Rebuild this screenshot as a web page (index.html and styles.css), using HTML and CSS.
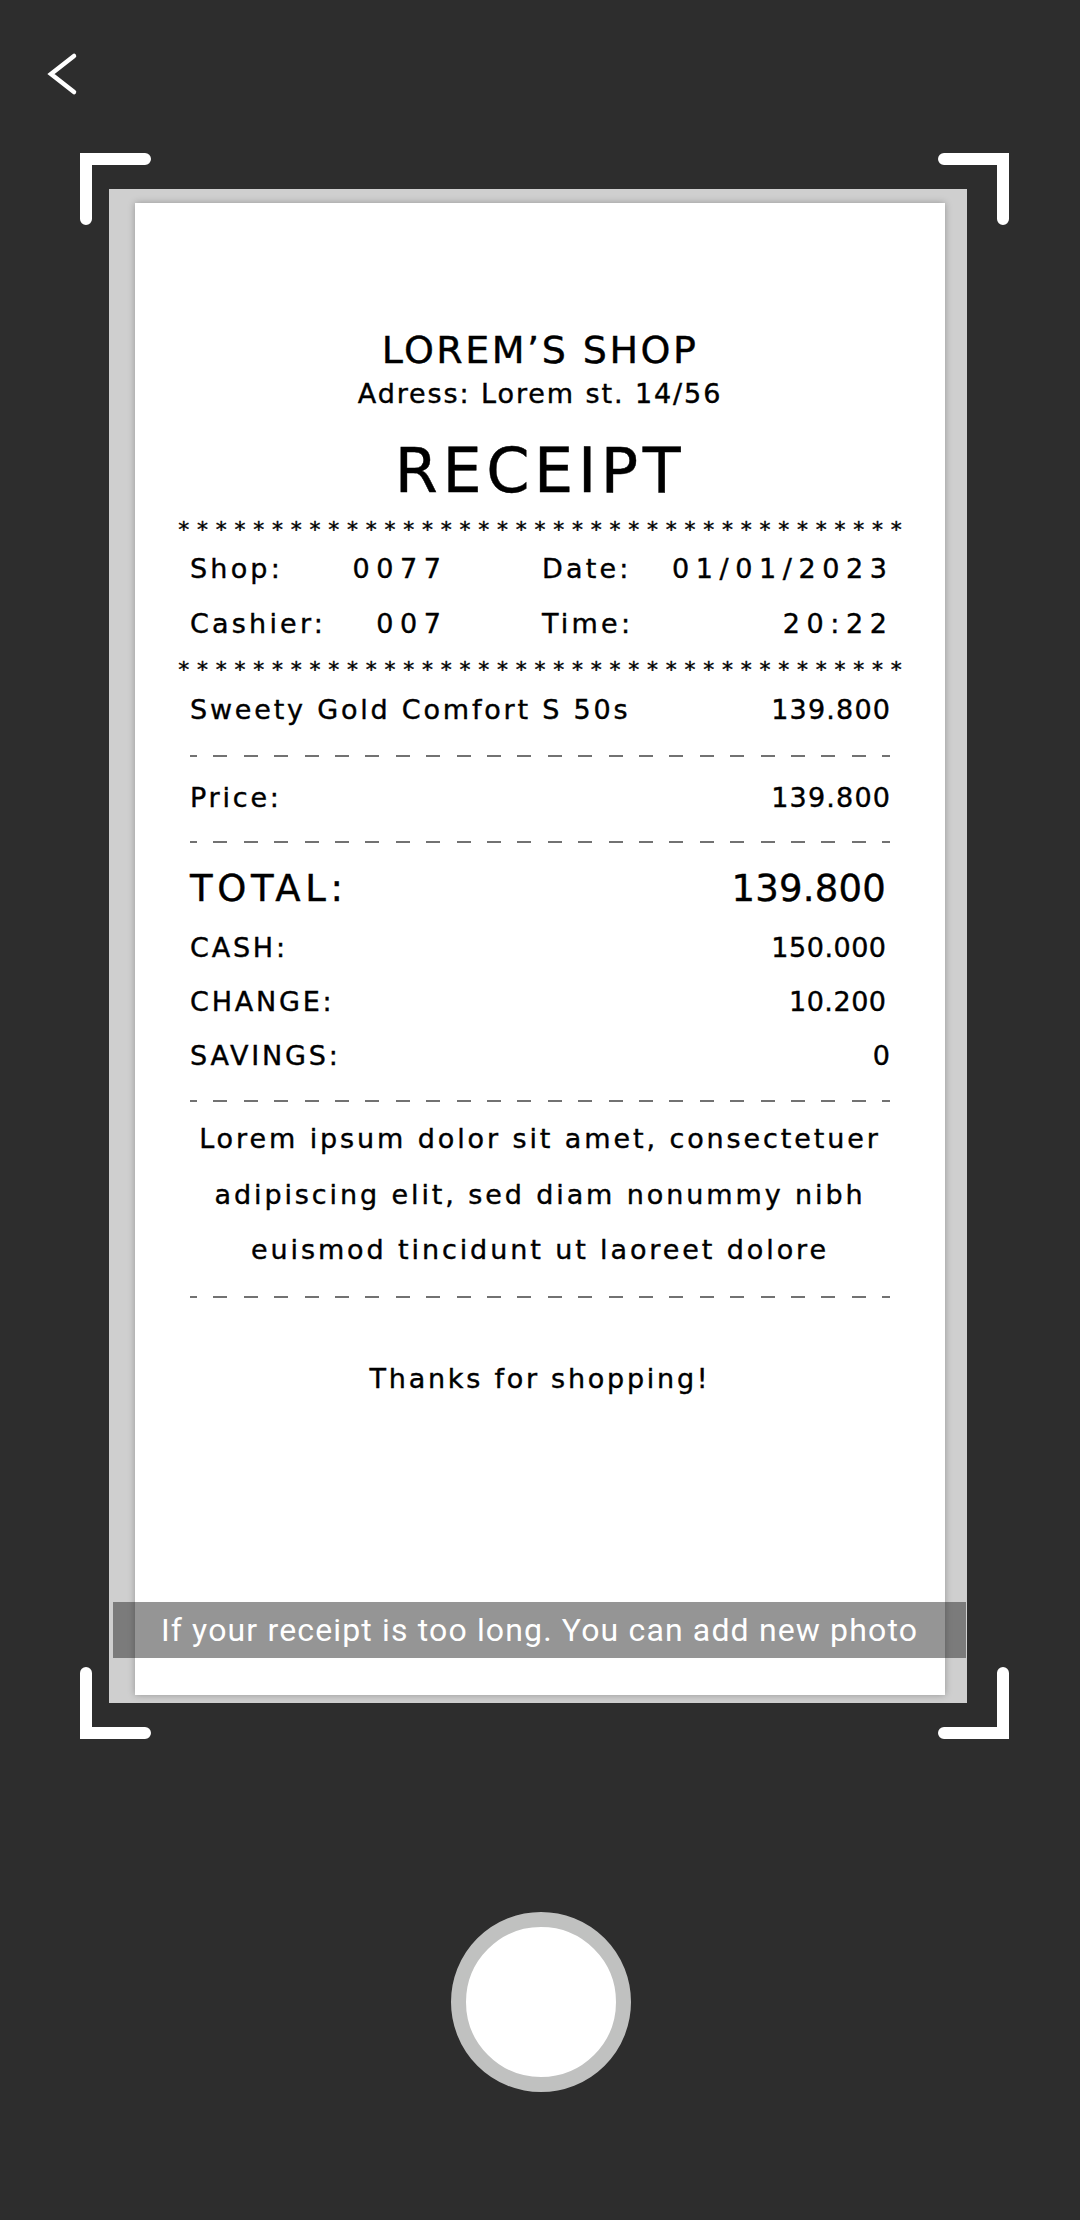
FILE: index.html
```html
<!DOCTYPE html>
<html lang="en">
<head>
<meta charset="utf-8">
<title>Scan receipt</title>
<link rel="stylesheet" href="styles.css">
</head>
<body>
<div class="screen">
  <header class="header">
    <svg class="back" width="40" height="52" viewBox="0 0 40 52" aria-label="Back">
      <path d="M30 8 L7 26 L30 44" fill="none" stroke="#fff" stroke-width="4.5" stroke-linecap="round" stroke-linejoin="miter"/>
    </svg>
  </header>

  <section class="scanner">
    <svg class="corner corner-tl" width="71" height="72" viewBox="0 0 71 72"><path d="M6 66 V6 H65" fill="none" stroke="#fff" stroke-width="12" stroke-linecap="round"/></svg>
    <svg class="corner corner-tr" width="71" height="72" viewBox="0 0 71 72"><path d="M6 6 H65 V66" fill="none" stroke="#fff" stroke-width="12" stroke-linecap="round"/></svg>
    <svg class="corner corner-bl" width="71" height="72" viewBox="0 0 71 72"><path d="M6 6 V66 H65" fill="none" stroke="#fff" stroke-width="12" stroke-linecap="round"/></svg>
    <svg class="corner corner-br" width="71" height="72" viewBox="0 0 71 72"><path d="M6 66 H65 V6" fill="none" stroke="#fff" stroke-width="12" stroke-linecap="round"/></svg>

    <div class="frame">
      <div class="paper">
        <div class="shop-name">LOREM’S SHOP</div>
        <div class="address">Adress: Lorem st. 14/56</div>
        <div class="title">RECEIPT</div>
        <div class="stars">***************************************</div>
        <div class="meta-row">
          <div class="meta-half first"><span class="label">Shop:</span><span class="num">0077</span></div>
          <div class="meta-half"><span class="label">Date:</span><span class="num">01/01/2023</span></div>
        </div>
        <div class="meta-row">
          <div class="meta-half first"><span class="label">Cashier:</span><span class="num">007</span></div>
          <div class="meta-half"><span class="label">Time:</span><span class="num">20:22</span></div>
        </div>
        <div class="stars stars-2">***************************************</div>
        <div class="row item"><span>Sweety Gold Comfort S 50s</span><span class="amt">139.800</span></div>
        <div class="dash dash-1"></div>
        <div class="row price"><span>Price:</span><span class="amt">139.800</span></div>
        <div class="dash dash-2"></div>
        <div class="row total"><span class="total-label">TOTAL:</span><span class="total-amt">139.800</span></div>
        <div class="row pay first-pay"><span>CASH:</span><span class="pay-amt">150.000</span></div>
        <div class="row pay"><span>CHANGE:</span><span class="pay-amt">10.200</span></div>
        <div class="row pay last-pay"><span>SAVINGS:</span><span class="pay-amt">0</span></div>
        <div class="dash dash-3"></div>
        <p class="note">Lorem ipsum dolor sit amet, consectetuer<br>adipiscing elit, sed diam nonummy nibh<br>euismod tincidunt ut laoreet dolore</p>
        <div class="dash dash-4"></div>
        <div class="thanks">Thanks for shopping!</div>
      </div>
      <div class="hint">If your receipt is too long. You can add new photo</div>
    </div>
  </section>

  <button class="shutter" aria-label="Take photo"></button>
</div>
</body>
</html>
```

FILE: styles.css
```css
* { box-sizing: border-box; }

html, body {
  margin: 0;
  padding: 0;
  background: #2d2d2d;
}

.screen {
  width: 1080px;
  height: 2220px;
  display: flex;
  flex-direction: column;
  background: #2d2d2d;
  overflow: hidden;
}

.header {
  height: 153px;
  padding: 48px 0 0 44px;
  flex: none;
}

.back { display: block; }

.scanner {
  position: relative;
  margin-left: 80px;
  width: 929px;
  height: 1586px;
  flex: none;
}

.corner { position: absolute; display: block; }
.corner-tl { left: 0; top: 0; }
.corner-tr { right: 0; top: 0; }
.corner-bl { left: 0; bottom: 0; }
.corner-br { right: 0; bottom: 0; }

.frame {
  position: relative;
  margin: 36px 0 0 29px;
  width: 858px;
  height: 1514px;
  background: #cfcfcf;
  padding: 14px 22px 8px 26px;
}

.paper {
  height: 100%;
  background: #fff;
  box-shadow: 0 0 7px rgba(0, 0, 0, 0.28);
  padding: 124px 55px 0;
  color: #000;
  font-family: "DejaVu Sans", "Liberation Sans", sans-serif;
  font-size: 27px;
  letter-spacing: 2.8px;
  -webkit-text-stroke: 0.4px #000;
}

.shop-name {
  font-size: 38px;
  line-height: 46px;
  letter-spacing: 2.5px;
  text-align: center;
}

.address {
  margin-top: 3px;
  line-height: 36px;
  letter-spacing: 1.9px;
  text-align: center;
}

.title {
  margin-top: 24px;
  font-size: 62px;
  line-height: 70px;
  letter-spacing: 4.6px;
  text-align: center;
}

.stars {
  margin: 14px -30px 1px;
  font-size: 22px;
  line-height: 20px;
  height: 20px;
  letter-spacing: 7.75px;
  text-indent: 7.75px;
  white-space: nowrap;
  text-align: center;
}
.stars-2 { margin-top: 9px; }

.meta-row {
  display: grid;
  grid-template-columns: 251px 345px;
  column-gap: 101px;
  line-height: 55px;
  height: 55px;
}
.meta-half {
  display: flex;
  justify-content: space-between;
}
.label { letter-spacing: 3.2px; }
.num {
  letter-spacing: 6.6px;
  margin-right: -6.6px;
}

.row {
  display: flex;
  justify-content: space-between;
  line-height: 55px;
  height: 55px;
  white-space: nowrap;
}
.amt { letter-spacing: 1.2px; margin-right: -1.2px; }
.item { margin-top: 2px; }
.price { margin-top: 13px; }
.total {
  margin-top: 21px;
  font-size: 37px;
  line-height: 50px;
  height: 50px;
  padding-right: 4px;
}
.total-label { letter-spacing: 4.6px; }
.total-amt { letter-spacing: 0.2px; }
.pay {
  line-height: 54px;
  height: 54px;
  padding-right: 4px;
}
.pay-amt { letter-spacing: 0.5px; margin-right: -0.5px; }
.first-pay { margin-top: 7px; }
.last-pay { padding-right: 0; }

.dash {
  height: 2px;
  background-image: repeating-linear-gradient(90deg, #727272 0 14px, transparent 14px 30.4px);
  background-position: -7px 0;
}
.dash-1 { margin-top: 18px; }
.dash-2 { margin-top: 16px; }
.dash-3 { margin-top: 17px; }
.dash-4 { margin-top: 18px; }

.note {
  margin: 9px 0 0;
  line-height: 55.5px;
  text-align: center;
  letter-spacing: 2.9px;
}

.thanks {
  margin-top: 53px;
  line-height: 55px;
  text-align: center;
  letter-spacing: 2.75px;
}

.hint {
  position: absolute;
  left: 4px;
  right: 1px;
  top: 1413px;
  height: 56px;
  background: rgba(25, 25, 25, 0.46);
  color: #fff;
  font-family: Roboto, "Liberation Sans", sans-serif;
  font-size: 32px;
  line-height: 56px;
  letter-spacing: 1.15px;
  text-align: center;
  white-space: nowrap;
}

.shutter {
  align-self: center;
  margin: 173px 0 0 1px;
  width: 180px;
  height: 180px;
  border-radius: 50%;
  border: 15px solid #c0c1c0;
  background: #fff;
  padding: 0;
  flex: none;
}
```
